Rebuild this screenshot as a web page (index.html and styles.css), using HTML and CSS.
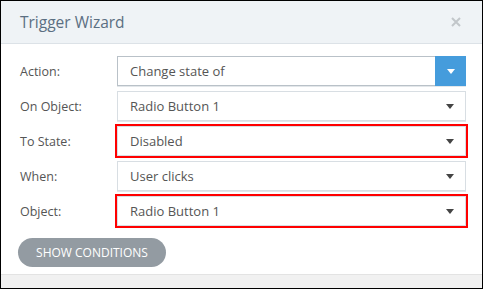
FILE: index.html
```html
<!DOCTYPE html>
<html lang="en">
<head>
  <meta charset="UTF-8">
  <title>Trigger Wizard</title>
  <link rel="stylesheet" href="styles.css">
</head>
<body>
  <div class="dialog">
    <div class="dialog-header">
      <h1>Trigger Wizard</h1>
      <svg class="close" width="10" height="10" viewBox="0 0 10 10">
        <path d="M1 1 L9 9 M9 1 L1 9" stroke="#c2c6ca" stroke-width="2"/>
      </svg>
    </div>
    <div class="dialog-body">
      <div class="row">
        <label>Action:</label>
        <div class="select primary">
          <span>Change state of</span>
          <span class="toggle"><i class="caret"></i></span>
        </div>
      </div>
      <div class="row">
        <label>On Object:</label>
        <div class="select">
          <span>Radio Button 1</span>
          <span class="toggle"><i class="caret"></i></span>
        </div>
      </div>
      <div class="row">
        <label>To State:</label>
        <div class="select marked">
          <span>Disabled</span>
          <span class="toggle"><i class="caret"></i></span>
        </div>
      </div>
      <div class="row">
        <label>When:</label>
        <div class="select">
          <span>User clicks</span>
          <span class="toggle"><i class="caret"></i></span>
        </div>
      </div>
      <div class="row">
        <label>Object:</label>
        <div class="select marked">
          <span>Radio Button 1</span>
          <span class="toggle"><i class="caret"></i></span>
        </div>
      </div>
      <button type="button" class="btn-conditions">Show Conditions</button>
    </div>
    <div class="dialog-footer"></div>
  </div>
</body>
</html>
```
FILE: styles.css
```css
* {
  margin: 0;
  padding: 0;
  box-sizing: border-box;
}
body {
  font-family: 'Open Sans', 'Noto Sans', sans-serif;
  background: #fff;
}
.dialog {
  width: 483px;
  height: 289px;
  border: 1px solid #000;
  display: flex;
  flex-direction: column;
  background: #fff;
}
/* Cabecera */
.dialog-header {
  height: 43px;
  background: #eff3f6;
  border-bottom: 1px solid #dce2e7;
  display: flex;
  align-items: center;
  justify-content: space-between;
  padding: 0 21px 0 19px;
}
.dialog-header h1 {
  font-size: 15.5px;
  font-weight: 400;
  color: #5b6f82;
}
.close {
  display: block;
}
/* Cuerpo */
.dialog-body {
  padding: 12px 16px 7px 19px;
}
.row {
  display: grid;
  grid-template-columns: 97px 1fr;
  align-items: center;
  margin-bottom: 5px;
}
.row label {
  font-size: 12.5px;
  color: #555;
}
.select {
  height: 30px;
  border: 1px solid #d8dee3;
  box-shadow: 0 1px 0 #e3e7ea;
  display: flex;
  align-items: center;
  justify-content: space-between;
  font-size: 13px;
  color: #555;
  padding-left: 12px;
}
.select.primary {
  border-color: #b9c1c8;
}
.select.marked {
  outline: 2px solid #f00;
}
.toggle {
  width: 31px;
  height: 100%;
  display: flex;
  align-items: center;
  justify-content: center;
}
.caret {
  width: 0;
  height: 0;
  border-left: 4px solid transparent;
  border-right: 4px solid transparent;
  border-top: 5px solid #444;
}
.primary .toggle {
  background: #459cdc;
  margin-right: -1px;
  height: calc(100% + 2px);
}
.primary .caret {
  border-top-color: #fff;
}
.btn-conditions {
  margin: 7px 0 0 -2px;
  width: 148px;
  height: 29px;
  border: none;
  border-radius: 15px;
  background: #939ba2;
  color: #fff;
  font-family: inherit;
  font-size: 12px;
  text-transform: uppercase;
}
/* Pie */
.dialog-footer {
  flex: 1;
  background: #f1f1f1;
  border-top: 1px solid #e3e3e3;
}
```
